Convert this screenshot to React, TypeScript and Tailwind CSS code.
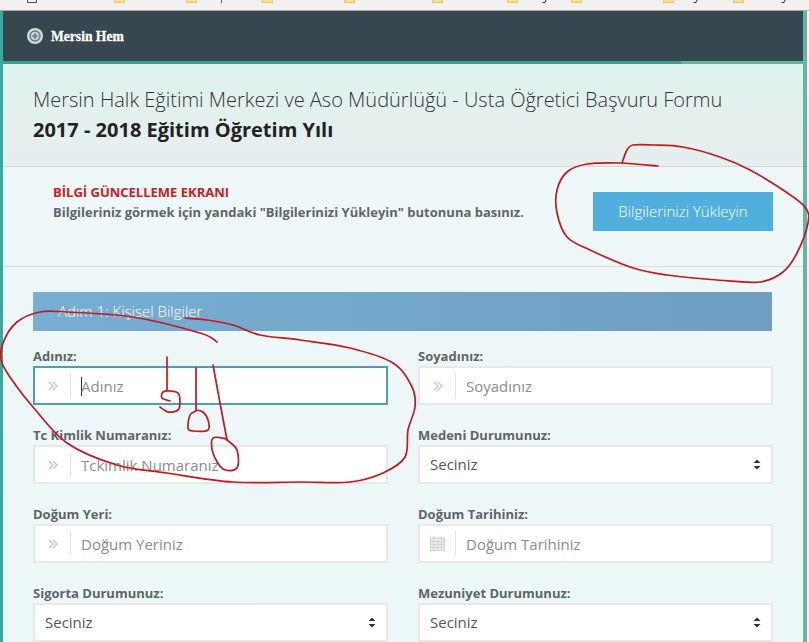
const smooth = (p: number[][]) => {
  let d = `M${p[0][0]} ${p[0][1]}`;
  for (let i = 0; i < p.length - 1; i++) {
    const a = p[Math.max(i - 1, 0)];
    const b = p[i];
    const c = p[i + 1];
    const e = p[Math.min(i + 2, p.length - 1)];
    const c1x = b[0] + (c[0] - a[0]) / 6;
    const c1y = b[1] + (c[1] - a[1]) / 6;
    const c2x = c[0] - (e[0] - b[0]) / 6;
    const c2y = c[1] - (e[1] - b[1]) / 6;
    d += `C${c1x} ${c1y} ${c2x} ${c2y} ${c[0]} ${c[1]}`;
  }
  return d;
};

const lassoTop = [[658,166],[620,163],[587,164],[567,172],[557,190],[557,213],[567,237],[590,250],[633,268],[667,275],[717,280],[760,282],[783,272],[797,253],[808,223],[805,207],[783,190],[750,170],[720,157],[683,147],[653,145],[633,145],[627,150],[622,163]];
const lassoForm = [[217,342],[200,333],[133,317],[67,312],[40,312],[17,322],[3,343],[2,363],[17,387],[33,407],[67,443],[117,465],[167,473],[233,482],[300,482],[350,482],[383,473],[405,457],[408,430],[415,407],[412,387],[393,363],[350,348],[300,340],[260,335],[233,325],[207,320],[185,318]];
const hook1 = [[170,401],[162,398],[163,392],[170,391],[178,393],[180,402],[178,410],[168,412],[160,407]];
const hook2 = [[196,411],[190,415],[188,428],[193,431],[208,430],[208,420],[203,412],[196,410]];
const hook3 = [[227,439],[213,438],[213,453],[223,469],[237,468],[237,450],[227,440]];

const Chevrons = () => (
  <svg width="10" height="10" viewBox="0 0 10 10" fill="none" stroke="#c4c4c4" strokeWidth="1.3" className="mt-[1px]">
    <path d="M1 1l4 4-4 4M5 1l4 4-4 4" />
  </svg>
);

const Calendar = () => (
  <svg width="15" height="15" viewBox="0 0 15 15" fill="none" stroke="#d4d4d4" strokeWidth="1">
    <rect x="0.5" y="2" width="14" height="12.5" fill="#ececec" />
    <path d="M0.5 5.5h14M0.5 8.5h14M0.5 11.5h14M3.5 5.5v9M7.5 5.5v9M11.5 5.5v9" />
    <path d="M3.5 0.5v3M11.5 0.5v3" strokeWidth="1.6" />
  </svg>
);

const Field = ({ label, placeholder, icon = "chev", focused = false }: { label: string; placeholder: string; icon?: string; focused?: boolean }) => (
  <div className="flex flex-col">
    <div className="h-[20px] text-[13px] leading-[20px] font-bold text-[#5f6568]">{label}</div>
    <div className={`flex items-center h-[39px] bg-white border-2 ${focused ? "border-[#4f9dbd]" : "border-[#e6e8e9]"}`}>
      <div className="w-[36px] h-[25px] border-r border-[#e4e4e4] flex items-center justify-center">
        {icon === "cal" ? <Calendar /> : <Chevrons />}
      </div>
      <div className="pl-[10px] pt-[2px] text-[15px] text-[#8c8c8c] flex items-center">
        {focused && <span className="block w-px h-[19px] -mr-px bg-[#333]" />}
        {placeholder}
      </div>
    </div>
  </div>
);

const SelectField = ({ label }: { label: string }) => (
  <div className="flex flex-col">
    <div className="h-[20px] text-[13px] leading-[20px] font-bold text-[#5f6568]">{label}</div>
    <div className="flex items-center justify-between h-[39px] bg-white border-2 border-[#e6e8e9] pl-[10px] pr-[10px]">
      <span className="text-[15px] text-[#555]">Seciniz</span>
      <svg width="8" height="11" viewBox="0 0 8 11" fill="#333">
        <path d="M4 0.5L7.5 4H0.5zM4 10.5L0.5 7H7.5z" />
      </svg>
    </div>
  </div>
);

const Folder = ({ ml }: { ml: string }) => <span className={`block ${ml} w-[11px] h-[3px] shrink-0 bg-[#f8e08e] border-b border-x border-[#e0c878]`} />;
const Tail = ({ ml }: { ml: string }) => (
  <svg width="5" height="3" viewBox="0 0 5 3" fill="none" stroke="#333" strokeWidth="1" className={`block ${ml} shrink-0`}>
    <path d="M4 0L3 2.5H0.5" />
  </svg>
);

export default function App() {
  return (
    <div className="relative w-[809px] h-[642px] overflow-hidden bg-white font-['Open_Sans',sans-serif]">
      <div className="h-[11px] bg-[#f2f1ef] border-b border-[#a8a8a8] overflow-hidden flex items-start">
        <span className="block ml-[27px] w-[10px] h-[3px] shrink-0 border-b border-x border-[#555]" />
        <Folder ml="ml-[77px]" />
        <Folder ml="ml-[61px]" />
        <span className="block ml-[24px] w-px h-[3px] shrink-0 bg-[#555]" />
        <Folder ml="ml-[40px]" />
        <Folder ml="ml-[71px]" />
        <Folder ml="ml-[77px]" />
        <Folder ml="ml-[64px]" />
        <Tail ml="ml-[24px]" />
        <Folder ml="ml-[24px]" />
        <Folder ml="ml-[81px]" />
        <Tail ml="ml-[19px]" />
        <Folder ml="ml-[35px]" />
        <Tail ml="ml-[37px]" />
      </div>
      <div className="w-[807px] h-[631px] border-l-[3px] border-l-[#3aa89c] border-r-[4px] border-r-[#62b6a6] bg-gradient-to-b from-[#f0f8f9] to-[#ecf7f8]">
        <div className="h-[53px] flex flex-col">
          <div className="h-[50px] bg-[#37474f] flex items-center pl-[24px] gap-[8px]">
            <svg width="16" height="16" viewBox="0 0 16 16">
              <circle cx="8" cy="8" r="8" fill="#d5dedd" />
              <circle cx="8" cy="8" r="5" fill="none" stroke="#65767a" strokeWidth="1.4" />
              <circle cx="8" cy="8" r="2.6" fill="#9fb0b0" />
              <path d="M8 4.5v7M4.5 8h7" stroke="#5a6b70" strokeWidth="0.8" />
            </svg>
            <span className="font-['Liberation_Serif',serif] font-bold text-[15px] text-white scale-x-[0.905] origin-left [-webkit-text-stroke:0.3px_white]">Mersin Hem</span>
          </div>
          <div className="h-[3px] bg-[linear-gradient(to_right,#3f9e92_678px,#62b3a2_678px)]" />
        </div>
        <div className="h-[103px] border-b border-[#cfd9d9] pl-[30px] pt-[21px] bg-gradient-to-b from-[#dff3ee] to-[#e6eeee]">
          <div className="text-[20px] leading-[30px] font-light text-[#333]">Mersin Halk Eğitimi Merkezi ve Aso Müdürlüğü - Usta Öğretici Başvuru Formu</div>
          <div className="text-[20px] leading-[30px] font-bold text-[#222]">2017 - 2018 Eğitim Öğretim Yılı</div>
        </div>
        <div className="h-[100px] border-b border-[#d5dfdf] pl-[50px] pr-[30px] flex items-start justify-between">
          <div className="pt-[15px]">
            <div className="text-[13px] leading-[20px] font-bold text-[#c9201e]">BİLGİ GÜNCELLEME EKRANI</div>
            <div className="text-[13px] leading-[20px] font-bold text-[#5f6568]">Bilgileriniz görmek için yandaki "Bilgilerinizi Yükleyin" butonuna basınız.</div>
          </div>
          <div className="w-[180px] h-[39px] mt-[25px] bg-[#51afdd] text-white text-[15px] font-light flex items-center justify-center">Bilgilerinizi Yükleyin</div>
        </div>
        <div className="px-[30px] pt-[25px]">
          <div className="w-[739px] h-[39px] bg-gradient-to-r from-[#77aed2] to-[#6f9fc2] text-white text-[15px] leading-[39px] pl-[25px] font-light">Adım 1: Kişisel Bilgiler</div>
          <div className="grid grid-cols-[355px_355px] gap-x-[30px] gap-y-[20px] pt-[15px]">
            <Field label="Adınız:" placeholder="Adınız" focused />
            <Field label="Soyadınız:" placeholder="Soyadınız" />
            <Field label="Tc Kimlik Numaranız:" placeholder="Tckimlik Numaranız" />
            <SelectField label="Medeni Durumunuz:" />
            <Field label="Doğum Yeri:" placeholder="Doğum Yeriniz" />
            <Field label="Doğum Tarihiniz:" placeholder="Doğum Tarihiniz" icon="cal" />
            <SelectField label="Sigorta Durumunuz:" />
            <SelectField label="Mezuniyet Durumunuz:" />
          </div>
        </div>
      </div>
      <svg className="absolute left-0 top-0 pointer-events-none" width="809" height="642" viewBox="0 0 809 642" fill="none" stroke="#c4181c" strokeWidth="1.7" strokeLinecap="round" strokeLinejoin="round">
        <path d={smooth(lassoTop)} />
        <path d={smooth(lassoForm)} />
        <path d="M167 357L167 390" />
        <path d={smooth(hook1)} />
        <path d="M196 368L196 410" />
        <path d={smooth(hook2)} />
        <path d="M213 365L220 403L227 440" />
        <path d={smooth(hook3)} />
      </svg>
    </div>
  );
}
